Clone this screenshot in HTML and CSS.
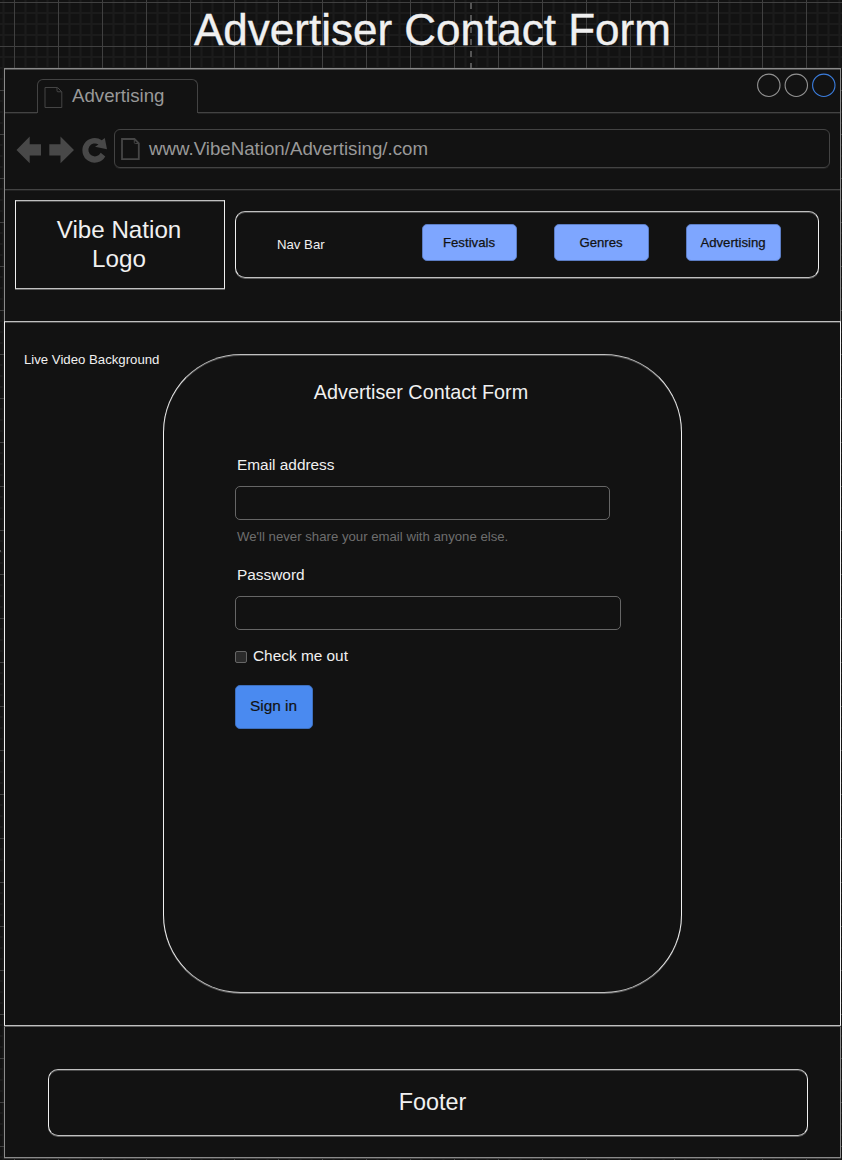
FILE: index.html
```html
<!DOCTYPE html>
<html lang="en">
<head>
<meta charset="utf-8">
<title>Advertiser Contact Form</title>
<link rel="stylesheet" href="styles.css">
</head>
<body>
<svg class="canvas-grid" width="842" height="1160" aria-hidden="true">
  <defs>
    <pattern id="grid" x="14" y="2" width="44" height="44" patternUnits="userSpaceOnUse">
      <path class="minor" d="M11.5 0V44M22.5 0V44M33.5 0V44M0 11H44M0 22H44M0 33H44"/>
      <path class="major" d="M.5 0V44M0 .5H44"/>
    </pattern>
  </defs>
  <rect width="842" height="1160" fill="url(#grid)"/>
  <path class="page-break" d="M471 3V68"/>
  <path class="page-break" d="M0 551H1"/>
</svg>
<h1 class="page-title">Advertiser Contact Form</h1>
<div class="window">
  <div class="tab-bar">
    <div class="tab-lead"></div>
    <div class="tab">
      <svg class="tab-icon" width="19" height="22" viewBox="0 0 19 22"><path d="M1 .5H13.500L17.800 4.800V20.500H1ZM13 1V3.800Q13 4.800 14 4.800H17.500"/></svg>
      <span>Advertising</span>
    </div>
    <div class="tab-rest">
      <svg width="80" height="26" viewBox="0 0 80 26" class="controls"><circle cx="12.800" cy="13.300" r="11.200"/><circle cx="40.300" cy="13.300" r="11.200"/><circle class="active" cx="67.800" cy="13.300" r="11.200"/></svg>
    </div>
  </div>
  <div class="toolbar">
    <svg class="nav-icons" width="92" height="28" viewBox="0 0 92 28">
      <path d="M.5 15 13.700 1.500V9.300H25V20.500H13.700V28.200ZM58 15 44.500 1.500V9.300H33.300V20.500H44.500V28.200Z"/>
      <path d="M88.800 3 91 14.300 79 11.700 82.500 9.500A6.500 6.500 0 1 0 84.700 17.800L89.300 21.500A12.300 12.300 0 1 1 85.800 5.300Z"/>
    </svg>
    <div class="address">
      <svg class="page-icon" width="19" height="23" viewBox="0 0 19 23"><path d="M1 1H13.500L17.800 5.300V21.200H1Z"/><path class="fold" d="M13.300 1.500V4.500Q13.300 5.500 14.300 5.500H17.500"/></svg>
      <span>www.VibeNation/Advertising/.com</span>
    </div>
  </div>
  <header class="header">
    <div class="logo line-box">Vibe Nation<br>Logo</div>
    <nav class="navbar line-box">
      <span class="nav-label">Nav Bar</span>
      <a class="nav-button">Festivals</a>
      <a class="nav-button">Genres</a>
      <a class="nav-button">Advertising</a>
    </nav>
  </header>
  <main class="main line-box">
    <div class="video-label">Live Video Background</div>
    <form class="card line-box">
      <h2 class="card-title">Advertiser Contact Form</h2>
      <label class="label">Email address</label>
      <div class="field email"></div>
      <p class="hint">We'll never share your email with anyone else.</p>
      <label class="label">Password</label>
      <div class="field password"></div>
      <div class="check"><span class="checkbox"></span><span>Check me out</span></div>
      <div class="submit">Sign in</div>
    </form>
  </main>
  <footer class="footer line-box">Footer</footer>
</div>
</body>
</html>
```
FILE: styles.css
```css
* { box-sizing: border-box; }
body {
  margin: 0;
  width: 842px;
  height: 1160px;
  overflow: hidden;
  background: #121212;
  color: #f0f0f0;
  font: 13.2px/16px "Liberation Sans", Arial, sans-serif;
}
.canvas-grid { position: absolute; top: 0; left: 0; z-index: -1; }
.minor { stroke: #1b1b1b; stroke-width: 2; fill: none; }
.major { stroke: #404040; fill: none; }
.page-break { stroke: #555; stroke-width: 2; stroke-dasharray: 6 6; }
.page-title {
  margin: 0;
  padding: 3px 0 0 194px;
  height: 68px;
  font-size: 44px;
  line-height: 53px;
  font-weight: 400;
  white-space: nowrap;
  -webkit-text-stroke: .4px #f0f0f0;
}
.window {
  margin-left: 4px;
  width: 837px;
  height: 1090px;
  border: 1px solid #8a8a8a;
  box-shadow: inset 0 1px #4b4b4b, 0 1px #3c3c3c;
  background: #121212;
}
.tab-bar { display: flex; height: 44px; }
.tab-lead { width: 32px; border-bottom: 1px solid #434343; box-shadow: 0 1px #222; }
.tab {
  display: flex;
  width: 161px;
  height: 34px;
  margin-top: 10px;
  padding: 5px 0 0 6px;
  border: 1px solid #434343;
  border-bottom: 0;
  border-radius: 6px 6px 0 0;
  color: #999;
  font-size: 18.7px;
  line-height: 22px;
  gap: 9px;
}
.tab-icon { margin-top: 2px; fill: none; stroke: #454545; }
.tab-rest {
  flex: 1;
  padding: 3px 4px 0 0;
  border-bottom: 1px solid #434343;
  box-shadow: 0 1px #222;
  text-align: right;
}
.controls { fill: none; stroke: #929292; stroke-width: 1.1; }
.controls .active { stroke: #3b7ddd; }
.toolbar {
  display: flex;
  height: 77px;
  padding: 16px 0 0 11px;
  border-bottom: 1px solid #434343;
  box-shadow: 0 1px #222;
}
.nav-icons { margin-top: 6px; fill: #484848; overflow: visible; }
.address {
  display: flex;
  width: 716px;
  height: 39px;
  margin-left: 6px;
  padding: 8px 0 0 6px;
  gap: 9px;
  border: 1px solid #434343;
  border-radius: 6px;
  box-shadow: 0 1px #222;
  color: #999;
  font-size: 18.7px;
  line-height: 22px;
}
.page-icon { fill: none; stroke: #464646; stroke-width: 1.8; }
.page-icon .fold { stroke-width: 1; }
.line-box {
  border: 1px solid #c0c0c0;
  border-left-color: #f0f0f0;
  border-right-color: #f0f0f0;
  box-shadow: inset 0 1px #4c4c4c, 0 1px #5d5d5d;
}
.header { display: flex; height: 131px; padding: 10px 0 0 10px; gap: 10px; }
.logo {
  width: 210px;
  height: 89px;
  padding: 14px 2px 0 0;
  font-size: 24.2px;
  line-height: 29px;
  text-align: center;
}
.navbar {
  display: flex;
  width: 584px;
  height: 67px;
  margin-top: 11px;
  padding: 12px 0 0 41px;
  border-radius: 10px;
}
.nav-label { width: 108px; padding-top: 13px; }
.nav-button {
  width: 95px;
  height: 37px;
  margin-left: 37px;
  padding-right: 1px;
  border: 1px solid #5c7dc4;
  border-radius: 5px;
  background: #7ea6ff;
  color: #121212;
  line-height: 35px;
  text-align: center;
  -webkit-text-stroke: .25px #121212;
}
.main { display: flex; width: 837px; height: 705px; margin-left: -1px; }
.video-label { width: 158px; padding: 30px 0 0 19px; white-space: nowrap; }
.card {
  width: 519px;
  height: 639px;
  margin-top: 32px;
  padding: 25px 71px 0;
  border-radius: 78px;
}
.card-title { margin: 0 0 52px; padding-right: 3px; font-size: 19.8px; line-height: 24px; font-weight: 400; text-align: center; }
.label { display: block; height: 30px; padding-left: 2px; font-size: 15.4px; line-height: 18px; }
.field {
  width: 375px;
  height: 34px;
  border: 1px solid #666;
  border-radius: 5px;
}
.password { width: 386px; }
.hint { margin: 9px 0 21px; padding-left: 2px; color: #6e6e6e; white-space: nowrap; }
.check { display: flex; margin-top: 17px; gap: 6px; font-size: 15.4px; line-height: 18px; }
.checkbox { width: 12px; height: 12px; margin-top: 4px; border: 1px solid #666; border-radius: 2px; background: #2b2b2b; }
.submit {
  width: 78px;
  height: 44px;
  margin-top: 20px;
  padding-right: 1px;
  border: 1px solid #3d6fbd;
  border-radius: 5px;
  background: #4a8af0;
  color: #121212;
  font-size: 15.4px;
  line-height: 40px;
  text-align: center;
  -webkit-text-stroke: .2px #121212;
}
.footer {
  width: 760px;
  height: 67px;
  margin: 43px 0 0 43px;
  padding-left: 9px;
  border-radius: 10px;
  font-size: 23.4px;
  line-height: 65px;
  text-align: center;
}
```
